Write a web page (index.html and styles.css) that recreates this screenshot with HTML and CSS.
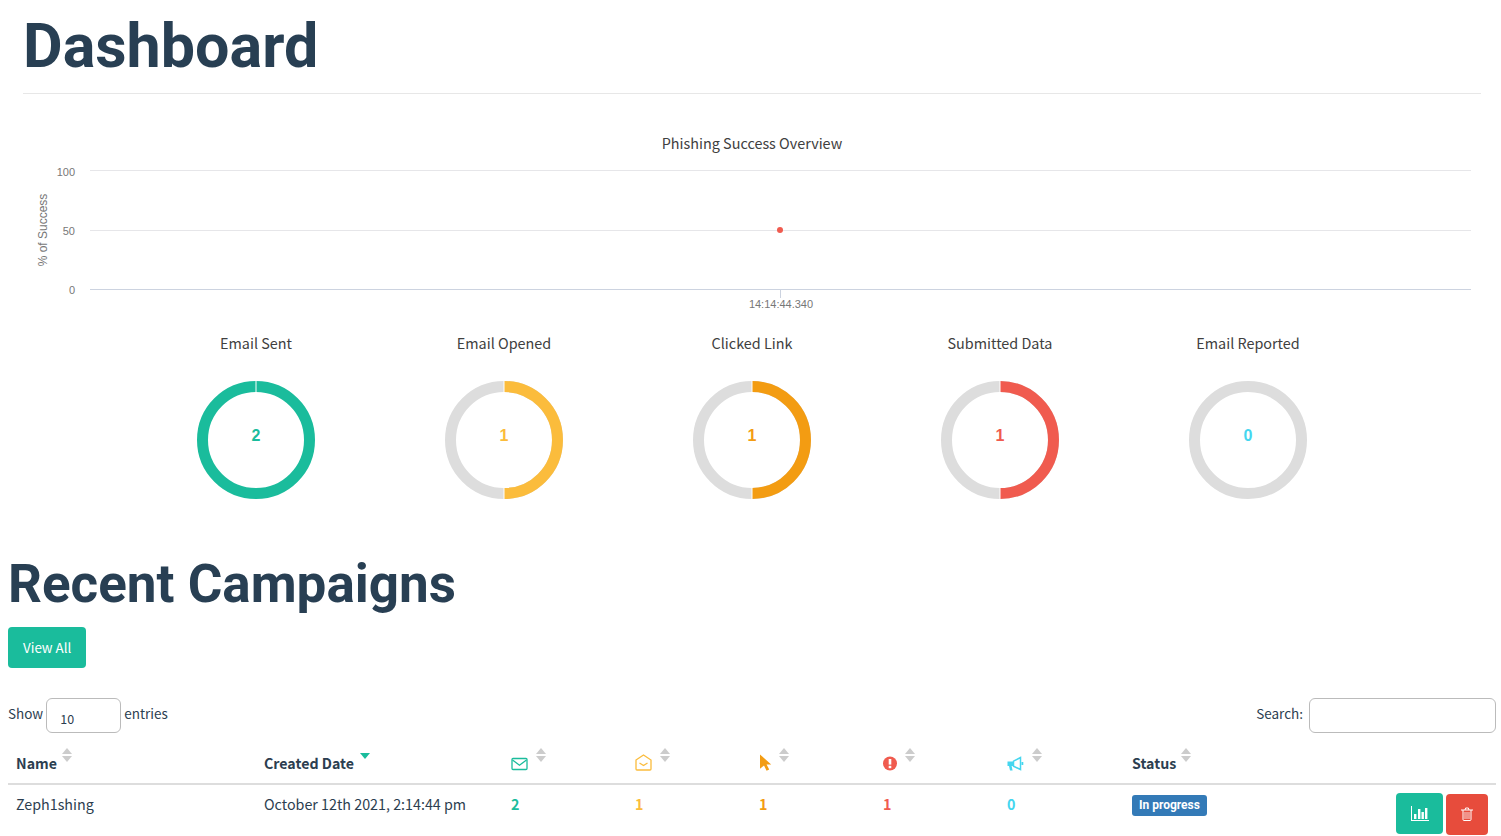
FILE: index.html
```html
<!DOCTYPE html>
<html lang="en">
<head>
    <meta charset="UTF-8">
    <meta name="viewport" content="width=device-width, initial-scale=1.0">
    <title>Dashboard</title>
    <link rel="stylesheet" href="styles.css">
</head>
<body>

    <div class="page-header">
        <h1>Dashboard</h1>
    </div>

    <svg class="line-chart" width="1501" height="200" viewBox="0 0 1501 200">
        <text class="chart-title" x="752" y="29">Phishing Success Overview</text>
        <line class="grid" x1="90" y1="50.5" x2="1471" y2="50.5"/>
        <line class="grid" x1="90" y1="110.5" x2="1471" y2="110.5"/>
        <line class="axis" x1="90" y1="169.5" x2="1471" y2="169.5"/>
        <line class="axis" x1="780.5" y1="170" x2="780.5" y2="178"/>
        <text class="tick end" x="75" y="56">100</text>
        <text class="tick end" x="75" y="115">50</text>
        <text class="tick end" x="75" y="174">0</text>
        <text class="tick" x="781" y="188">14:14:44.340</text>
        <text class="tick axis-label" transform="translate(47 110) rotate(-90)">% of Success</text>
        <circle cx="780" cy="110" r="3" fill="#f05b4f"/>
    </svg>

    <div class="pie-row">
        <div class="pie-item">
            <div class="pie-title">Email Sent</div>
            <svg class="pie" width="120" height="120" viewBox="0 0 120 120">
                <circle cx="60" cy="60" r="53.5" fill="none" stroke="#1abc9c" stroke-width="11"/>
                <line x1="60" y1="0" x2="60" y2="13" stroke="#fff" stroke-width="1"/>
                <text class="pie-value" x="60" y="61" fill="#1abc9c">2</text>
            </svg>
        </div>
        <div class="pie-item">
            <div class="pie-title">Email Opened</div>
            <svg class="pie" width="120" height="120" viewBox="0 0 120 120">
                <circle cx="60" cy="60" r="53.5" fill="none" stroke="#dddddd" stroke-width="11"/>
                <path d="M60 6.5A53.5 53.5 0 0 1 60 113.5" fill="none" stroke="#fbbc3c" stroke-width="11"/>
                <line x1="60" y1="0" x2="60" y2="120" class="pie-gap" stroke-dasharray="13 94 13"/>
                <text class="pie-value" x="60" y="61" fill="#fbbc3c">1</text>
            </svg>
        </div>
        <div class="pie-item">
            <div class="pie-title">Clicked Link</div>
            <svg class="pie" width="120" height="120" viewBox="0 0 120 120">
                <circle cx="60" cy="60" r="53.5" fill="none" stroke="#dddddd" stroke-width="11"/>
                <path d="M60 6.5A53.5 53.5 0 0 1 60 113.5" fill="none" stroke="#f39c12" stroke-width="11"/>
                <line x1="60" y1="0" x2="60" y2="120" class="pie-gap" stroke-dasharray="13 94 13"/>
                <text class="pie-value" x="60" y="61" fill="#f39c12">1</text>
            </svg>
        </div>
        <div class="pie-item">
            <div class="pie-title">Submitted Data</div>
            <svg class="pie" width="120" height="120" viewBox="0 0 120 120">
                <circle cx="60" cy="60" r="53.5" fill="none" stroke="#dddddd" stroke-width="11"/>
                <path d="M60 6.5A53.5 53.5 0 0 1 60 113.5" fill="none" stroke="#f05b4f" stroke-width="11"/>
                <line x1="60" y1="0" x2="60" y2="120" class="pie-gap" stroke-dasharray="13 94 13"/>
                <text class="pie-value" x="60" y="61" fill="#f05b4f">1</text>
            </svg>
        </div>
        <div class="pie-item">
            <div class="pie-title">Email Reported</div>
            <svg class="pie" width="120" height="120" viewBox="0 0 120 120">
                <circle cx="60" cy="60" r="53.5" fill="none" stroke="#dddddd" stroke-width="11"/>
                <text class="pie-value" x="60" y="61" fill="#45d6ef">0</text>
            </svg>
        </div>
    </div>

    <div class="campaigns">
        <h2>Recent Campaigns</h2>
        <a class="btn-primary" href="#">View All</a>

        <div class="table-controls">
            <label>Show <span class="length-box">10</span> entries</label>
            <label>Search: <input type="search" class="search-box"></label>
        </div>

        <table class="campaign-table">
            <colgroup>
                <col class="col-name">
                <col class="col-date">
                <col class="col-stat">
                <col class="col-stat">
                <col class="col-stat">
                <col class="col-stat">
                <col class="col-stat-last">
                <col class="col-status">
                <col>
            </colgroup>
            <thead>
                <tr>
                    <th>Name<span class="sort"></span></th>
                    <th>Created Date<span class="sort-active"></span></th>
                    <th>
                        <svg class="stat-icon" width="18" height="14" viewBox="0 0 18 14" fill="none" stroke="#1abc9c" stroke-width="1.3">
                            <rect x="1" y="1.5" width="15" height="11" rx="1"/>
                            <path d="M1.5 3l7 5.2L15.5 3"/>
                        </svg><span class="sort"></span>
                    </th>
                    <th>
                        <svg class="stat-icon" width="18" height="17" viewBox="0 0 18 17" fill="none" stroke="#fbbc3c" stroke-width="1.3">
                            <path d="M1 6L8.5 1L16 6V15a1 1 0 0 1-1 1H2a1 1 0 0 1-1-1z"/>
                            <path d="M4.5 9L8.5 11.5L12.5 9"/>
                        </svg><span class="sort"></span>
                    </th>
                    <th>
                        <svg class="stat-icon pointer-icon" width="14" height="17" viewBox="0 0 14 17" fill="#f39c12">
                            <path d="M1 0.5L12.2 10.5H7.6L10.2 15.6L7.6 16.8L5 11.6L1 14.8z"/>
                        </svg><span class="sort"></span>
                    </th>
                    <th>
                        <svg class="stat-icon" width="15" height="15" viewBox="0 0 15 15">
                            <circle cx="7" cy="7.5" r="7" fill="#f05b4f"/>
                            <rect x="5.7" y="3" width="2.6" height="5.6" fill="#fff"/>
                            <rect x="5.7" y="9.8" width="2.6" height="2.4" fill="#fff"/>
                        </svg><span class="sort"></span>
                    </th>
                    <th>
                        <svg class="stat-icon" width="18" height="15" viewBox="0 0 18 15" fill="#45d6ef">
                            <path d="M0.5 5.5H6V10H4.6L5.6 14.4H3L2 10H0.5z"/>
                            <path d="M6.5 5.2L13.5 1.5V13.5L6.5 10.2z" fill="none" stroke="#45d6ef" stroke-width="1.5"/>
                            <rect x="14.5" y="6" width="1.8" height="3"/>
                        </svg><span class="sort"></span>
                    </th>
                    <th>Status<span class="sort"></span></th>
                    <th></th>
                </tr>
            </thead>
            <tbody>
                <tr>
                    <td>Zeph1shing</td>
                    <td>October 12th 2021, 2:14:44 pm</td>
                    <td class="num sent">2</td>
                    <td class="num opened">1</td>
                    <td class="num clicked">1</td>
                    <td class="num submitted">1</td>
                    <td class="num reported">0</td>
                    <td><span class="label-progress">In progress</span></td>
                    <td class="actions">
                        <a class="btn-primary btn-icon" href="#">
                            <svg width="18" height="15" viewBox="0 0 18 15" fill="#fff">
                                <rect x="0" y="0" width="1" height="15"/>
                                <rect x="0" y="14" width="18" height="1"/>
                                <rect x="3" y="8" width="2.4" height="5"/>
                                <rect x="7" y="3" width="2.4" height="10"/>
                                <rect x="10.5" y="6" width="2.4" height="7"/>
                                <rect x="14" y="2" width="2.4" height="11"/>
                            </svg>
                        </a><a class="btn-danger btn-icon" href="#">
                            <svg width="12" height="14" viewBox="0 0 12 14" fill="none" stroke="#fff" stroke-width="1">
                                <path d="M0 3H12M2 3V12.5a1 1 0 0 0 1 1H9a1 1 0 0 0 1-1V3M4 3L4.6 1H7.4L8 3"/>
                                <path d="M4 5V12M6 5V12M8 5V12" stroke-opacity="0.8"/>
                            </svg>
                        </a>
                    </td>
                </tr>
            </tbody>
        </table>
    </div>

</body>
</html>
```

FILE: styles.css
```css
body {
    margin: 0;
    font-family: "Noto Sans CJK SC", "Source Sans Pro", "Open Sans", sans-serif;
    font-size: 14.3px;
    color: #2c3e50;
    background-color: #fff;
    overflow: hidden;
}

h1, h2 {
    font-family: Roboto, sans-serif;
    font-weight: 700;
    color: #283f53;
    margin: 0;
}

.page-header {
    margin: 0 20px 0 23px;
    height: 93px;
    border-bottom: 1px solid #e7e7e7;
}

.page-header h1 {
    font-size: 61px;
    line-height: 92px;
}

.line-chart {
    display: block;
    margin-top: 26px;
    margin-bottom: 0;
}

.chart-title {
    font-size: 14.4px;
    fill: #404040;
    text-anchor: middle;
}

.grid {
    stroke: #e6e6e9;
    stroke-width: 1;
}

.axis {
    stroke: #ccd3e0;
    stroke-width: 1;
}

.tick {
    font-family: "Liberation Sans", sans-serif;
    font-size: 11px;
    fill: #777;
    text-anchor: middle;
}

.tick.end {
    text-anchor: end;
}

.tick.axis-label {
    font-size: 12px;
}

.pie-row {
    display: grid;
    grid-template-columns: repeat(5, 248px);
    margin-left: 132px;
    margin-top: 13px;
}

.pie-item {
    text-align: center;
}

.pie-title {
    font-size: 14.4px;
    line-height: 20px;
    color: #404040;
}

.pie {
    display: block;
    margin: 27px auto 0;
}

.pie-gap {
    stroke: #fff;
    stroke-width: 1;
}

.pie-value {
    font-family: "Liberation Sans", sans-serif;
    font-size: 16px;
    font-weight: 700;
    text-anchor: middle;
}

.campaigns {
    padding: 0 5px 0 8px;
    margin-top: 49px;
}

.campaigns h2 {
    font-size: 53px;
    line-height: 70px;
    margin-bottom: 8px;
}

.btn-primary, .btn-danger {
    display: inline-block;
    color: #fff;
    text-decoration: none;
    border-radius: 4px;
}

.btn-primary {
    background-color: #1abc9c;
}

.btn-danger {
    background-color: #e74c3c;
}

.campaigns > .btn-primary {
    padding: 0 15px;
    font-size: 13.4px;
    line-height: 41px;
}

.table-controls {
    display: flex;
    justify-content: space-between;
    align-items: center;
    margin-top: 30px;
    height: 35px;
    font-size: 13.5px;
}

.table-controls label {
    display: flex;
    align-items: flex-start;
    gap: 3px;
    line-height: 31px;
}

.length-box {
    display: block;
    box-sizing: border-box;
    width: 75px;
    height: 35px;
    padding: 10px 0 0 13px;
    font-size: 12.5px;
    line-height: 20px;
    border: 1px solid #bbb;
    border-radius: 6px;
}

.search-box {
    box-sizing: border-box;
    width: 187px;
    height: 35px;
    margin: 0 0 0 3px;
    border: 1px solid #bbb;
    border-radius: 6px;
}

.campaign-table {
    width: 1488px;
    margin-top: 11px;
    border-collapse: collapse;
    table-layout: fixed;
}

.col-name { width: 248px; }
.col-date { width: 247px; }
.col-stat { width: 124px; }
.col-stat-last { width: 125px; }
.col-status { width: 140px; }

th {
    height: 40px;
    padding: 0 8px 9px;
    box-sizing: border-box;
    text-align: left;
    vertical-align: bottom;
    font-weight: 700;
    font-size: 14.2px;
    line-height: 21px;
    border-bottom: 2px solid #ddd;
}

td {
    padding: 7px 8px 0;
    vertical-align: top;
    line-height: 24px;
}

.stat-icon {
    vertical-align: -2px;
    margin-right: 2px;
}

.pointer-icon {
    margin-right: 1px;
}

.sort, .sort-active {
    display: inline-block;
    position: relative;
    width: 11px;
    height: 14px;
    margin-left: 5px;
    top: -7px;
    vertical-align: baseline;
}

.sort::before, .sort::after, .sort-active::after {
    content: "";
    position: absolute;
    left: 0;
    border-left: 5.5px solid transparent;
    border-right: 5.5px solid transparent;
}

.sort::before {
    top: 0;
    border-bottom: 6px solid #ccc;
}

.sort::after {
    top: 8px;
    border-top: 6px solid #ccc;
}

.sort-active {
    margin-left: 6px;
}

.sort-active::after {
    top: 5px;
    border-top: 6px solid #1abc9c;
}

.num {
    font-weight: 700;
}

.sent { color: #1abc9c; }
.opened { color: #fbbc3c; }
.clicked { color: #f39c12; }
.submitted { color: #f05b4f; }
.reported { color: #45d6ef; }

.label-progress {
    display: inline-block;
    vertical-align: top;
    margin-top: 3px;
    padding: 0 7px;
    font-family: Roboto, sans-serif;
    font-size: 12px;
    font-weight: 700;
    line-height: 21px;
    color: #fff;
    background-color: #337ab7;
    border-radius: 3px;
}

.actions {
    text-align: right;
    padding-top: 8px;
    white-space: nowrap;
}

.btn-icon {
    display: inline-flex;
    align-items: center;
    justify-content: center;
    height: 41px;
}

.btn-icon.btn-primary {
    width: 47px;
    margin-right: 3px;
}

.btn-icon.btn-danger {
    width: 42px;
}
```
